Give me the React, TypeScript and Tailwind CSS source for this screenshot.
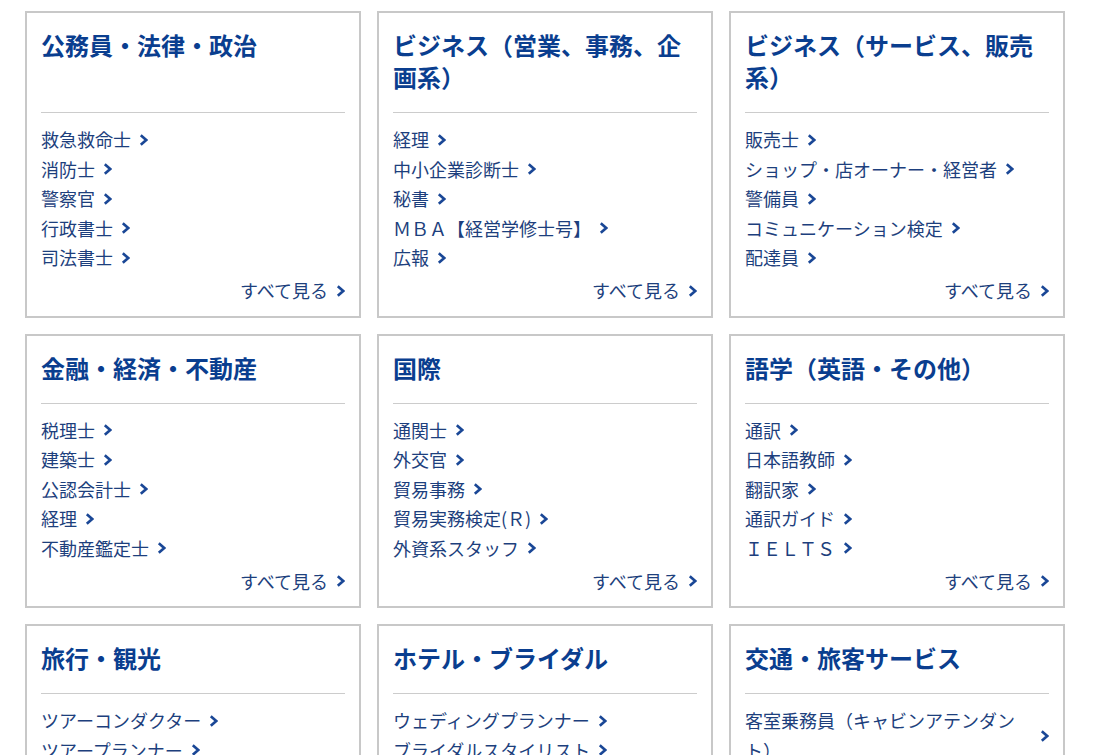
import React from "react";

type Card = { title: string; links: string[] };

const rows: { titleH: string; cards: Card[] }[] = [
  {
    titleH: "min-h-[64px]",
    cards: [
      { title: "公務員・法律・政治", links: ["救急救命士", "消防士", "警察官", "行政書士", "司法書士"] },
      { title: "ビジネス（営業、事務、企画系）", links: ["経理", "中小企業診断士", "秘書", "ＭＢＡ【経営学修士号】", "広報"] },
      { title: "ビジネス（サービス、販売系）", links: ["販売士", "ショップ・店オーナー・経営者", "警備員", "コミュニケーション検定", "配達員"] },
    ],
  },
  {
    titleH: "min-h-[32px]",
    cards: [
      { title: "金融・経済・不動産", links: ["税理士", "建築士", "公認会計士", "経理", "不動産鑑定士"] },
      { title: "国際", links: ["通関士", "外交官", "貿易事務", "貿易実務検定(Ｒ)", "外資系スタッフ"] },
      { title: "語学（英語・その他）", links: ["通訳", "日本語教師", "翻訳家", "通訳ガイド", "ＩＥＬＴＳ"] },
    ],
  },
  {
    titleH: "min-h-[32px]",
    cards: [
      { title: "旅行・観光", links: ["ツアーコンダクター", "ツアープランナー", "旅行業務取扱管理者", "観光英語検定", "添乗員"] },
      { title: "ホテル・ブライダル", links: ["ウェディングプランナー", "ブライダルスタイリスト", "ホテルスタッフ", "ホテルフロント", "ブライダルコーディネーター"] },
      { title: "交通・旅客サービス", links: ["客室乗務員（キャビンアテンダント）", "グランドスタッフ", "パイロット", "鉄道運転士", "バス運転手"] },
    ],
  },
];

function Chevron() {
  return (
    <svg width="9" height="12" viewBox="0 0 9 12" className="shrink-0 ml-2" aria-hidden>
      <polyline points="1.8,1.2 7.2,6 1.8,10.8" fill="none" stroke="#1a4796" strokeWidth="2.6" strokeLinecap="butt" strokeLinejoin="miter" />
    </svg>
  );
}

function CardView({ card, titleH }: { card: Card; titleH: string }) {
  return (
    <div className="border-2 border-[#c8c8c8] bg-white px-[14px] pt-4 pb-[10px] flex flex-col">
      <h2 className={`${titleH} text-[24px] leading-[32px] font-bold text-[#0a3e8f] mb-[19px]`}>{card.title}</h2>
      <div className="h-px bg-[#cccccc]" />
      <ul className="pt-[12px] flex flex-col items-start">
        {card.links.map((l) => (
          <li key={l} className="max-w-full">
            <a href="#" className="inline-flex items-center text-[18px] leading-[29.5px] text-[#1d3f7d] max-w-full">
              <span className="min-w-0">{l}</span>
              <Chevron />
            </a>
          </li>
        ))}
      </ul>
      <div className="mt-[3.5px] flex justify-end">
        <a href="#" className="inline-flex items-center text-[18px] leading-[29.5px] text-[#1d3f7d]">
          <span>すべて見る</span>
          <Chevron />
        </a>
      </div>
    </div>
  );
}

export default function App() {
  return (
    <div
      className="bg-white min-h-screen pl-[25px] pt-[11px] pb-8"
      style={{ fontFamily: '"Noto Sans CJK JP", "Noto Sans", sans-serif' }}
    >
      <div className="flex flex-col gap-4 w-[1040px]">
        {rows.map((row, i) => (
          <div key={i} className="grid grid-cols-3 gap-4">
            {row.cards.map((c) => (
              <CardView key={c.title} card={c} titleH={row.titleH} />
            ))}
          </div>
        ))}
      </div>
    </div>
  );
}
